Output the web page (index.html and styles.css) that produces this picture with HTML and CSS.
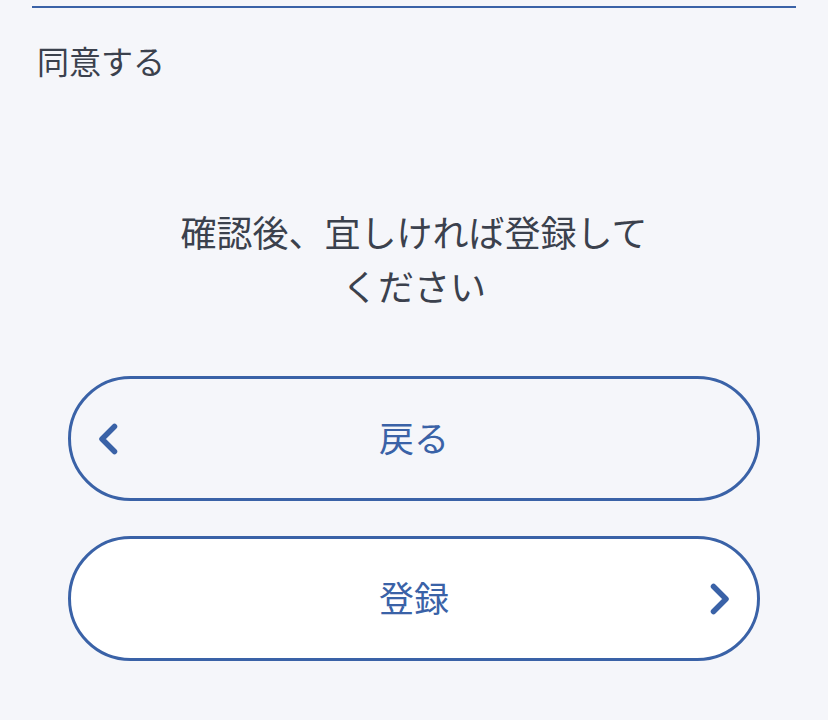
FILE: index.html
```html
<!DOCTYPE html>
<html lang="ja">
<head>
<meta charset="utf-8">
<link rel="stylesheet" href="styles.css">
</head>
<body>
<div class="page">
  <div class="rule"></div>
  <p class="agree">同意する</p>
  <p class="message">確認後、宜しければ登録してください</p>
  <div class="actions">
    <button class="btn btn-back" type="button">
      <svg class="chev" width="20" height="32" viewBox="0 0 20 32"><path d="M16.5 3.5 L4 16 L16.5 28.5" fill="none" stroke="#3a62a7" stroke-width="5.5" stroke-linecap="round" stroke-linejoin="round"/></svg>
      <span class="label">戻る</span>
    </button>
    <button class="btn btn-submit" type="button">
      <span class="label">登録</span>
      <svg class="chev" width="20" height="32" viewBox="0 0 20 32"><path d="M3.5 3.5 L16 16 L3.5 28.5" fill="none" stroke="#3a62a7" stroke-width="5.5" stroke-linecap="round" stroke-linejoin="round"/></svg>
    </button>
  </div>
</div>
</body>
</html>
```

FILE: styles.css
```css
* { box-sizing: border-box; }
html, body {
  margin: 0;
  padding: 0;
  background: #f5f6fa;
}
body {
  font-family: "Noto Sans CJK JP", "Noto Sans", sans-serif;
  color: #3b414d;
}
.page {
  width: 828px;
  height: 720px;
  overflow: hidden;
  padding-top: 6px;
}
.rule {
  margin: 0 32px;
  height: 2px;
  background: #3a62a7;
}
.agree {
  margin: 28px 0 0 0;
  padding-left: 37px;
  font-size: 32px;
  line-height: 48px;
}
.message {
  margin: 120px auto 0;
  max-width: 480px;
  text-align: center;
  font-size: 36px;
  line-height: 54px;
}
.actions {
  margin: 64px 68px 0;
  display: flex;
  flex-direction: column;
  gap: 35px;
}
.btn {
  display: grid;
  grid-template-columns: 1fr auto 1fr;
  align-items: center;
  height: 125px;
  padding: 0 27px;
  border: 3.5px solid #3a62a7;
  border-radius: 63px;
  font-family: inherit;
  font-size: 35px;
  color: #3a62a7;
  cursor: pointer;
}
.btn-back { background: #f5f6fa; }
.btn-submit { background: #ffffff; }
.btn .label {
  grid-column: 2;
  line-height: 1;
  margin-top: -5px;
}
.btn-back .chev { grid-column: 1; grid-row: 1; justify-self: start; }
.btn-back .label { grid-row: 1; }
.btn-submit .chev { grid-column: 3; grid-row: 1; justify-self: end; }
.btn-submit .label { grid-row: 1; }
.chev { display: block; }
```
